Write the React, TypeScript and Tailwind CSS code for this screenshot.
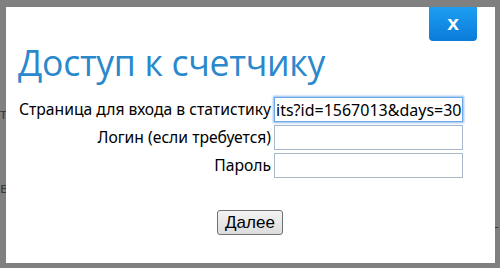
import React from "react";

export default function App() {
  return (
    <div className="relative w-[500px] h-[268px] overflow-hidden bg-[#808080]" style={{ fontFamily: '"Noto Sans", sans-serif' }}>
      {/* background page text partly hidden by the dialog */}
      <span className="absolute left-[0px] top-[102px] text-[15px] text-[#3a3a3a]">т</span>
      <span className="absolute left-[0px] top-[176px] text-[15px] text-[#3a3a3a]">вы</span>
      <span className="absolute left-[492px] top-[218px] text-[15px] text-[#3a3a3a]">г</span>

      {/* dialog */}
      <div className="absolute left-[6px] top-[7px] w-[489px] h-[256px] bg-white flex flex-col">
        <div className="flex justify-end pr-[18px]">
          <button className="w-[48px] h-[34px] rounded-b-[4px] bg-gradient-to-b from-[#1d9ef2] to-[#0a7bd9] text-white font-bold text-[21px] leading-none flex items-center justify-center pb-[4px]" style={{ fontFamily: '"Liberation Sans", Arial, sans-serif' }}>
            x
          </button>
        </div>
        <h1 className="pl-[12px] mt-[1px] text-[35.6px] leading-[41px] font-normal text-[#2a88cc] tracking-[-0.3px]" style={{ fontFamily: '"Open Sans", sans-serif' }}>
          Доступ к счетчику
        </h1>
        <div className="mt-[14px] flex flex-col gap-[3px] text-[15.7px] text-black">
          <div className="flex items-center">
            <div className="w-[268px] text-right pr-[3px] whitespace-nowrap">Страница для входа в статистику</div>
            <div className="w-[189px] h-[25px] border border-[#6ea7e6] shadow-[0_0_2px_1px_#8dbdf0] flex items-center overflow-hidden pl-[1px] text-[16px] whitespace-nowrap" style={{ fontFamily: '"Noto Sans", sans-serif' }}>
              its?id=1567013&amp;days=30<span className="inline-block w-px h-[18px] bg-black" />
            </div>
          </div>
          <div className="flex items-center">
            <div className="w-[268px] text-right pr-[3px]">Логин (если требуется)</div>
            <div className="w-[189px] h-[25px] border border-[#a9b8c8]" />
          </div>
          <div className="flex items-center">
            <div className="w-[268px] text-right pr-[3px]">Пароль</div>
            <div className="w-[189px] h-[25px] border border-[#a9b8c8]" />
          </div>
        </div>
        <div className="mt-[32px] flex justify-center">
          <button className="w-[66px] h-[25px] rounded-[3px] border border-[#707070] bg-gradient-to-b from-[#f4f4f4] to-[#dcdcdc] text-[17px] leading-none text-black flex items-center justify-center ml-[-1px]" style={{ fontFamily: '"Liberation Sans", Arial, sans-serif' }}>
            Далее
          </button>
        </div>
      </div>
    </div>
  );
}
